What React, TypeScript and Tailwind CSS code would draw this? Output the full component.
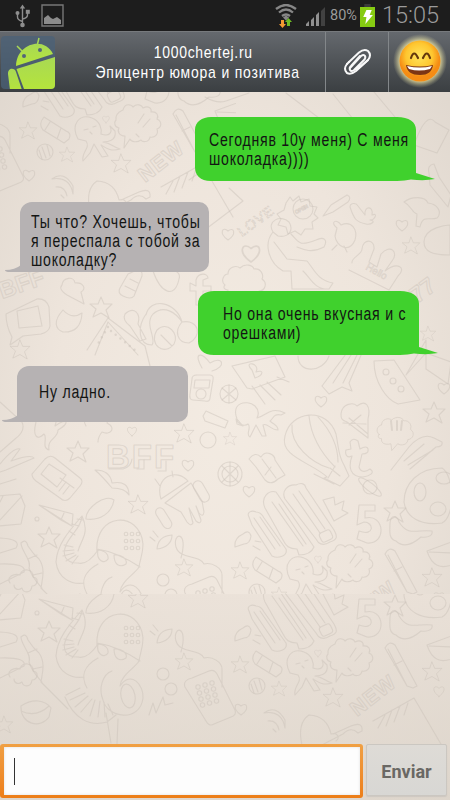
import React from "react";

const sans = "font-['Liberation_Sans',Arial,sans-serif]";

const STAR = "M0-11 3-4 11-4 5 2 8 10 0 5-8 9-5 1-11-4-3-4Z";
const HEART = "M0 6C-10-1-5-8 0-3 6-8 9 0 0 6Z";
const CLOUD =
  "M-20 4c-5-4-1-11 3-11 0-7 8-9 12-6 5-5 13-3 14 1 7-1 10 6 8 10 6 4 3 12-3 12 0 6-8 8-12 5l-7 8-1-8c-7 2-12-1-11-6-4 0-5-3-3-5Z";

type Spot = [number, number, number?];

function Shapes({ d, spots }: { d: string; spots: Spot[] }) {
  return (
    <>
      {spots.map(([x, y, s = 1], i) => (
        <path key={i} d={d} transform={`translate(${x} ${y}) scale(${s})`} />
      ))}
    </>
  );
}

function Wallpaper() {
  return (
    <svg className="h-full w-full" viewBox="0 92 450 708" preserveAspectRatio="none">
      <defs>
        <radialGradient id="paper" cx=".5" cy=".45" r=".75">
          <stop offset="0" stopColor="#f3ebe2" />
          <stop offset=".5" stopColor="#eee5dc" />
          <stop offset="1" stopColor="#ddd5cc" />
        </radialGradient>
        <linearGradient id="fold" x2="0" y2="1">
          <stop offset="0" stopColor="#eae1d8" stopOpacity=".8" />
          <stop offset="1" stopColor="#ddd5cb" stopOpacity=".7" />
        </linearGradient>
        <clipPath id="top"><path d="M0 92h450v502H0z" /></clipPath>
        <clipPath id="bottom"><path d="M0 594h450v206H0z" /></clipPath>
        <clipPath id="corner"><path d="M0 92h236v130H0z" /></clipPath>
        <g id="lower">
          <Shapes d={STAR} spots={[[240, 571, 0.8], [279, 595, 0.7], [333, 604, 0.9], [432, 578, 0.9], [395, 512], [49, 538], [138, 505, 0.9], [184, 568, 0.8], [4, 631, 0.8]]} />
          <Shapes d={HEART} spots={[[318, 559, 0.6], [241, 615], [439, 597, 0.9]]} />
          <path d="M285 499c-4-8 3-15 11-14 6-3 9-1 10 3l28 42c4 7 3 10-4 12-8 5-12 1-14-3ZM265 508c-5-11 4-18 11-16l38 55c-3 7-9 8-15 8l-2-6c-8 0-11-3-14-9ZM249 517c-3-5 3-7 7-5 4 0 6 2 8 6l22 31c2 7-8 10-14 7l-20-31Z" />
          <path d="m293 494 27 39m-21-42 26 38m-53-27 31 44m-24-42 27 40m-52-26 21 31m-15-32 20 29M323 500l11-3 1 8 9-4-2 9 6 3-14 8Z" />
          <rect x="320" y="531" width="12" height="10" rx="3" transform="rotate(-25 326 536)" />
          <path d="M359 505h16v6h-10v7c20-5 22 27 2 25l-10-4 2-8c16 6 15-9 5-9l-7 3Z" />
          <path d="M390 523c1-9 7-8 9-1 9 15 19 7 33 9 1 4-3 7-11 6-8 7-17 12-25 4-8-2-6-11-6-18Z" />
          <path d="M328 560c-1-7 5-9 7-10 2-8 9-5 10-3 4-4 9-2 10 1 6-3 9 1 8 4 6-1 8 4 6 7 6 3 4 9 0 10 2 6-3 9-7 8-1 6-8 5-9 3-4 3-10 2-11-1l-6 9 1-12c-6 0-8-5-6-8-5-1-5-6-3-8Zm22 3 6-9m-1 13 7-8m-14 15 3 3" />
          <path d="M256 557l22 14q6 2 3 8l-5 4-21-13q-5-6 1-13Zm6 5-5 8m16-2-4 11" />
          <path d="M290 579c-8-15 2-26 14-21 8 3 10 11 9 16 8 3 12-1 9-8l5 5c2 10-8 11-12 11 8 1 10 5 17 7-9 3-14-1-19-4l7 11-6 1-8-13-4 9-7 8c-2-9 8-13 3-20Zm6-9 4-1m5-2 3-1m-6 6 2 2" />
          <circle cx="257" cy="592" r="8" /><path d="m251 590 3 9m0-12 4 11m1-13 3 11" />
          <path d="M385 554q4-8 10-3l22 41-4 2-6-2Zm9 17 8-4m-14-12 19 37M427 551l27-10v23q-20 9-27-13Zm2 1 25 1" />
          <path d="M243 534q6-5 8 2-1 8-7 8l-9 3q-1-9 8-13Zm10 12 7 4m-5-9 6 1M264 619q12-9 21 7v8q-3-18-21-15Zm4 8q9-1 11 9m-6-1 3 3" />
          <path d="M302 651q-5-22 7-30 18 1 22 19c7-2 9 4 5 7m-3-7 18-8q12-5 11 5l-4 2q-7-7-15 1l-23 12M373 627l41-23 31 53M378 634l7-13m1 11 6-16m2 12 6-16m4 9 4-12" />
          {/* octopus in a helmet */}
          <path d="M97 552c-3-40 43-42 46-8 0 11-3 15-4 23-4 7-18 14-19 25 11-16 24-1 23 12-3 25-36 20-40 2-5-12 0-26 9-29M97 549q20 3 43 18M98 550c3 0 11 2 10 9-4 6-12 1-10-9Zm16 5c7-1 14 4 12 9-6 4-12 1-12-9ZM98 550c-6 9-12 15-20 13-13 0-16-8-12-18 5-11 15-17 16-29 8 17-1 24-4 35M82 516C68 532 57 545 56 562c2 17 16 23 28 21M98 564c-16 9-17 19-11 30M65 603c9 22 25 30 42 25l9-7m-50-20 14-7m-10 12 15-7m-10 14 13-11m-7 16 11-13m-2 17 5-16m3 17 2-16m5 16-1-15m9 13-5-11M64 545l9 2m-10 4 11-1m-11 6 11-3m-8 8 10-6m-4 9 6-8m-9-25 6 4m-3-11 7 2m-2-7 6 1M106 619l5 30m7-24-1 25" />
          <ellipse cx="128" cy="602" rx="7" ry="12" transform="rotate(-12 128 602)" />
          <path d="M21 543q5-5 7 3 5 8 11 13c7 10 3 21 2 29l27 27M21 543c0 8 11 17 8 25 3 10 9 15 13 20M28 559l9-4m-4 20 9-2M39 505l34 9-1 12ZM39 505l22 15 3-7m-3 7 11 6M86 519c-1-11 20-26 28-19-2 13-14 21-28 19Z" />
          <path d="M157 549q1-13 15-14c0 8-6 13-15 14Zm-2-8-5-4m8 0-5-6M181 558c8-28-9-26-5-11 4 13 23 7 28 17 8-2 18 4 18 11v18M185 593c-2-5 2-8 7-9l17-7q5-2 8 3l18 36q2 5-4 7l-17 7q-5 3-8-3Z" />
          <path d="M10 583c-4-6 4-10 10-8 2-8 14-6 13 2 7 1 4 9-1 9-1 8-9 7-10 2-4 3-8 1-8-3M21 612c12-8 24-6 30 2l-2 9c-8 12-29 8-28-11Zm0 5q15 7 28-5M149 621l4-12 3 10 7-16 2 8 8-2M0 538q22 1 16 10l-16 5m0 11q27-1 24 8L0 584M-2 496l22-2 5 12-4 18-23 2ZM0 520l22-24M3 496l-3 6" />
          <circle cx="163" cy="580" r="6" /><circle cx="171" cy="595" r="6" /><circle cx="37" cy="519" r="2" />
          {[0, 1, 2, 3, 4, 5, 6, 7, 8].map((n) => (
            <circle key={n} cx={126 + (n % 3) * 6} cy={534 + Math.floor(n / 3) * 7} r="1.8" />
          ))}
          {[0, 1, 2, 3, 4, 5, 6, 7, 8, 9, 10, 11].map((n) => (
            <circle key={`key${n}`} cx={198 + (n % 3) * 7 + Math.floor(n / 3) * 1.500} cy={593 + Math.floor(n / 3) * 6 - (n % 3) * 2} r="2.2" />
          ))}
          <path d="M404 502c0-18 14-34 38-34 12 7 14 48 0 55-22 3-36-6-38-21Z" />
          <ellipse cx="420" cy="492" rx="6" ry="9" /><ellipse cx="438" cy="509" rx="8" ry="7" /><ellipse cx="444" cy="478" rx="8" ry="6" />
          <text transform="translate(357 623) rotate(-38)" fontSize="21" fontWeight="700" fontFamily="Liberation Sans" letterSpacing="1">NEW</text>
        </g>
      </defs>
      <rect y="92" width="450" height="708" fill="url(#paper)" />
      <g fill="none" stroke="#c9c0b7" strokeOpacity=".46" strokeWidth="1.1" strokeLinejoin="round" strokeLinecap="round">
        <g clipPath="url(#corner)"><use href="#lower" transform="translate(-212 -440)" /></g>
        <g clipPath="url(#top)">
          <use href="#lower" />
          <Shapes d={STAR} spots={[[411, 246, 0.8], [78, 452], [184, 434, 0.9], [434, 413], [20, 350, 0.9], [101, 308], [230, 439, 0.6], [428, 334, 0.7]]} />
          <Shapes d={HEART} spots={[[228, 234], [251, 253, 1.5], [402, 225], [132, 431, 0.8], [188, 465], [321, 401], [444, 388], [249, 491]]} />
          <Shapes d={CLOUD} spots={[[396, 431, 0.85], [245, 281]]} />
          <path d="m391 421 1 9m5-9v9m5-9-1 9" strokeWidth="2" />
          <path d="M286 203l4-6 3 4 6-5 2 6 8-3 1 7 7 1-3 7 4 4-6 4 1 7-8 0-4 6-6-4-7 3-2-7-8-2 3-6-4-5 7-4Z" />
          <circle cx="303" cy="209" r="10" />
          <text transform="translate(296 214) rotate(-28)" fontSize="5" fontFamily="Liberation Sans">OPEN</text>
          <text transform="translate(242 237) rotate(-36)" fontSize="14" fontFamily="Liberation Sans" letterSpacing="1" strokeDasharray="2 2">LOVE</text>
          <text transform="translate(365 269) rotate(29)" fontSize="10" fontFamily="Liberation Sans" strokeWidth=".7">Hello</text>
          <text transform="translate(417 304) rotate(-36)" fontSize="23" fontWeight="700" fontFamily="Liberation Sans">77</text>
          <text transform="translate(2 299) rotate(-19)" fontSize="24" fontWeight="700" fontFamily="Liberation Sans">BFF</text>
          <text x="106" y="468" fontSize="33" fontWeight="700" fontFamily="Liberation Sans" letterSpacing="2">BFF</text>
          <path d="M109 469h14q8-2 9-10m5 10h7v-9m14 11h8v-10" />
          <path d="M273 232c-7-11 8-18 16-10 5 8 0 16-11 14Zm0 0c-10 12-4 31 10 39h8l1 18h37M291 234c8 8 7 13 25 6 8-4 12 0 8 7-13 7-22 2-27 0m-23-5 13 17 20 2c7 8 10 19 26 22l-4 6c-15 1-19-12-26-18" />
          <path d="m323 216 8-11 16-10q5 2 1 7l-15 10ZM350 207c0-4 6-5 8-1l7 9c-1-10 9-9 7 0 7-3 2 6-2 5 7 1 1 5-4 4-10-2-12-5-16-17ZM337 228c-8-6 0-10 4-3 11-5 17 5 14 15-6 14-19 6-20-4Zm0 17-5 5m12-4 3 6M404 202c8-6 21-6 24 1 9 1 15 9 9 15-8 3-14-4-17 9l-4-1 1-12c-5-1-5-8-13-12Z" />
          <path d="M352 263c-1-6 10-8 10-14 1-11 13-10 12 0l-5 13 8 5 4-13c10-11 18-1 11 7l-7 10c13-10 22-3 13 5l-9 14-40-20M424 242c0-15 24-17 26-17v30c-17 0-26-3-26-13Z" />
          <path d="M6 314 37 299q9-1 12 8l1 19q-1 6-9 8l-18 2-13 9 2-8q-6-11-6-23Zm11-3 21-5 4 20-23 2ZM128 274l9-4q6 0 5 6l-8 20q-3 4-11 0-6-3-3-8Zm-3 12 10 5m-5-12 8 4M62 285c1-8 12-9 13-2 8-1 12 6 6 9l3 12-17-9c-5-3-8-7-5-10Zm1 25q9 10 19 3-1 20-19 19c-8-3-10-11 0-22Z" />
          <path d="M153 271c8-7 30-2 26 8-4 20-18 15-26-8Zm37 12 6 3v-6c2-8 12-7 12-2l-5 2v6h8v5h-8v14h-7v-14h-6ZM146 315c4-18 30-14 36 7 18-3 20 15 7 21-12 0-15-12-7-21-6-9-18-18-29-8-9 10 4 25-1 31-14 0-15-18-6-31ZM125 314c9-8 16-1 13 10l8 15-6 2-10-15q-8-6-5-12ZM87 350l21-32 37 28 5 20M108 322l-13 33m13-33 30 33" />
          <path d="m108 327-12 20m15-16 25 20" strokeWidth="2.500" strokeDasharray="0 6" />
          <path d="M157 330c10-10 23 4 17 14-10 13-26 0-17-14Zm4 5 11 11M202 368c-9-15-1-17 8-5 13-8 17 4 2 8M197 375h13q4 0 3 5l-3 18q0 4-5 3l-12-1q-4 0-3-6l2-15q0-4 5-4Zm-2 5h15l-1 8h-15Z" />
          <circle cx="201" cy="394" r="5" /><circle cx="208" cy="440" r="8" /><circle cx="229" cy="394" r="9" /><path d="m222 388 14 12m0-12-14 12m7-15v18" /><circle cx="230" cy="474" r="12" /><circle cx="230" cy="474" r="8" /><path d="m222 466 16 16m0-16-16 16m8-20v24" />
          <path d="m232 366 43-10 10 21-33 12-5-1Zm20 4c-10-10 9-7 4 2 8-3 8 3-1 6Zm0 16 13 18m-5-19 15 15m-8-18 14 13m-4-18 12 5M298 356c0 18 25 17 31 0M322 386l30-40m13 0-16 37 3 8-10-4-13 7-7-8M333 383l20-31m-10 31 15-30M374 361c0 22 13 39 24 43l22-4-26-40Zm32 14 20-35v29l22 15 3-22-25-9-20 22" />
          <circle cx="386" cy="372" r="3" /><circle cx="393" cy="381" r="3" /><circle cx="401" cy="389" r="3" />
          <path d="M237 419c-6-16 9-20 18-13 5 5 3 10 2 12 9-2 13-12 28-5l-4 2c-7-2-8 4-11 6 4 4 8 4 8 9-8 0-11-8-15-5l3 11h-4l-6-11-6 12c-5-2 2-10-2-13-4 3-10 0-12-5l1 5 6 2Z" />
          <path d="M327 477c-14-14-48-20-42-41 5-25 42-30 51-2 3 15 2 21 8 31l5 11-9 10-16-8ZM292 425c-2 20 20 38 37 43m-20-52c2 20 12 37 26 51m-17-50c13 14 20 29 20 45m-8 6 10 8m-5-10-7 12m-14-4 20 10M341 414c1-11 13-12 16-8 9-7 14 0 11 13v19l-21-16c-6-2-6-4-6-8Zm2 9 23 1m-17-6 19 16m-7-19-12 10" />
          <path d="M346 450l5-1-1-7q3-5 8-1l2 8q7-4 8 0 1 5-6 5l-3 13c2 6 7 5 11 2 6 4-1 7-7 8-13 0-15-10-11-21-6 3-7-3-6-6ZM249 459q6-8 12-2c5-8 14-2 14 3l10 15-7 4q-7 7-13 1l-9-13ZM262 459l14 19m-11-3 6-8M391 470l18-23q13-15 25-9l8 4q1 5-6 5l-26 22M404 461l20-17m-16 21 25-15" />
          <ellipse cx="370" cy="487" rx="14" ry="4" transform="rotate(38 370 487)" /><circle cx="370" cy="487" r="7" />
          <path d="m32 474 13-15q5-5 10-1l25 20q4 3 0 8l-10 12q-5 5-10 0l-24-17q-4-3-4-7Zm9 0 8-10 17 11-9 12Zm25 8-7 9m11-6-7 9m-3-16 14 10M95 470q15 0 17 13 17-3 17 12-4-7-17-7-10-12-17-18Z" />
          {/* robot */}
          <path d="M161 499c-7-23 16-31 27-18Zm-1-13-5-7m18-2-1-6M165 503l26-20 11 18 2 11q-1 6-5 1l-3-7 5 14q0 5-5 1l-7-13 4 15q-2 4-6-1l-6-10Z" />
          <rect x="159" y="507" width="9" height="23" rx="5" transform="rotate(-32 163 518)" /><rect x="196" y="480" width="10" height="23" rx="5" transform="rotate(-30 201 491)" />
          <path d="M36 422c-1-17 3-14 12-5 7-3 10 0 7 9 13-9 15-3 3 4 0 9-11 8-9 20-8-2-1-13-5-16-6 6-12 4-8-12ZM86 426c-6-10 5-16 10-8 5-9 15-2 11 5 10 5 3 13-5 9-4 5-4 8-4 10M0 402l22 20q4 9-7 17L0 452m0 12q14-17 20-15l-9 12q20-7 23-3L6 470 0 472m0 12 16-5" />
          <path d="m203 416 3-5 22 10-3 7-20-7ZM414 145q12-34 21-23l14 8-12 23ZM429 173q-2-8 5-9l5 13 12 18-3 12-18-22Z" />
          <path d="M205 97q12 7 21 4l23-8m37 0 50 38M333 94l28 35M374 92l21 25M189 180l45-32m-5 40 14 13-45 34" />
        </g>
        <g clipPath="url(#bottom)">
          <rect y="594" width="450" height="206" fill="url(#fold)" stroke="none" />
          <use href="#lower" transform="translate(0 94)" />
        </g>
      </g>
    </svg>
  );
}

function StatusBar() {
  return (
    <div className="relative z-10 flex h-[31px] items-center bg-[#1d1d1d] text-[#9b9b9b]">
      <svg className="ml-[15px] h-6 w-[15px] shrink-0" viewBox="0 0 15 24" fill="none" stroke="#8e8e8e" strokeWidth="1.4">
        <path d="M7.500 21V4M2.500 10v3q0 3 5 4.500M12.500 8v3q0 3-5 4" />
        <path d="M4.800 4.500 7.500.5l2.700 4Z" fill="#8e8e8e" stroke="none" />
        <circle cx="7.500" cy="21" r="2.300" fill="#8e8e8e" stroke="none" />
        <circle cx="2.500" cy="9" r="2" fill="#8e8e8e" stroke="none" />
        <path d="M10.800 5.800h4v4h-4z" fill="#8e8e8e" stroke="none" />
      </svg>
      <svg className="ml-[11px] h-[23px] w-[23px] shrink-0" viewBox="0 0 23 23">
        <path d="M1 1h21v21H1z" fill="none" stroke="#777" strokeWidth="1.400" />
        <path d="M3 20v-6l4-3 3 3 2 1 4-2 4 3v4Z" fill="#8c8c8c" />
      </svg>
      <svg className="ml-[211px] h-6 w-[22px] shrink-0" viewBox="0 0 22 24" fill="none">
        <path d="M1 5q10-8 20 0M4 8.500q7-6 14 0M7 12q4-3 8 0" stroke="#878787" strokeWidth="2.300" />
        <path d="m8 13.500 3-2 3 2-3 3Z" fill="#878787" />
        <path d="M6 16h3v4h2l-3.500 4L4 20h2Z" fill="#f49a32" />
        <path d="M12 22h3v-4h2l-3.500-4-3.500 4h2Z" fill="#70bd24" />
      </svg>
      <svg className="mt-[2px] ml-[8px] h-[21px] w-[21px] shrink-0" viewBox="0 0 21 21">
        <path d="M16 5l4-4v19h-4Z" fill="#414141" />
        <path d="M1 20v-2l3-3v5Zm5 0v-6l3-3v9Zm5 0V9l3-3v14Z" fill="#909090" />
      </svg>
      <span className="ml-[4px] w-[28px] shrink-0 whitespace-nowrap pt-px font-['Roboto',sans-serif] text-[14.5px] leading-none">80%</span>
      <svg className="ml-[2px] h-[23px] w-[15px] shrink-0" viewBox="0 0 14 23" preserveAspectRatio="none">
        <path d="M4 0h6v3H4z" fill="#3a3a3a" />
        <path d="M0 3h14v20H0z" fill="#86cb12" />
        <path d="M6 6h5l-2 5h3l-7 9 1-7H3Z" fill="white" />
      </svg>
      <span className="ml-[7px] whitespace-nowrap pt-px font-['Roboto',sans-serif] text-[23.500px] font-light leading-none">15:05</span>
    </div>
  );
}

function Header() {
  return (
    <header className="relative z-10 flex h-[61px] items-center border-t border-[#777a7d] bg-linear-to-b from-[#65696e] to-[#3b3f42]">
      <svg className="ml-px h-[53px] w-[54px] shrink-0" viewBox="0 0 54 53">
        <defs>
          <linearGradient id="droid" x2="0" y2="1"><stop stopColor="#a8d954" /><stop offset="1" stopColor="#b5e43c" /></linearGradient>
          <clipPath id="badge"><rect width="54" height="53" rx="4" /></clipPath>
        </defs>
        <rect width="54" height="53" rx="4" fill="#4b6178" fillOpacity=".75" />
        <g clipPath="url(#badge)" fill="url(#droid)">
          <path d="M15 30C15 8 43-1 52 18Z" />
          <path d="M15.500 33 54 21v32H23Z" />
          <path d="M7 38c0-7 7-6 8-2l6 18H9Z" />
          <path d="m16 10 5 5m17-13-2 8" stroke="#a8d954" strokeWidth="1.500" />
          <circle cx="23" cy="20" r="2" fill="#536579" /><circle cx="39" cy="14" r="2" fill="#536579" />
        </g>
      </svg>
      <div className={`flex h-full w-[270px] shrink-0 flex-col items-center justify-center pt-px pl-[16px] text-[17px] leading-[20px] text-white ${sans}`}>
        <span className="ml-[11px] origin-center scale-x-[.82] whitespace-nowrap tracking-[.85px]">1000chertej.ru</span>
        <span className="origin-center scale-x-[.82] whitespace-nowrap tracking-[1px]">Эпицентр юмора и позитива</span>
      </div>
      <div className="flex h-full w-[64px] shrink-0 items-center justify-center border-x border-[#83878a]">
        <svg className="h-7 w-[29px]" viewBox="0 0 29 28" fill="none" stroke="#f7f7f7" strokeWidth="2" strokeLinecap="round" strokeLinejoin="round">
          <path d="M6 14 16 4.500q5-4 9-1.500 4 4 0 9L13 23q-5 4-9 2-4-4 0-9" />
          <path d="M4 16 6 14M7 20 18 8q3-2 4 0 1 2-1 4L11 22q-3 2-4 0-1-2 1-4l9-10M11 22q4-1 7-4l7-6" />
        </svg>
      </div>
      <div className="flex h-full flex-1 items-center justify-center pb-[3px]">
        <svg className="h-[56px] w-[56px] shrink-0" viewBox="0 0 56 56">
          <defs>
            <radialGradient id="halo"><stop offset=".7" stopColor="#fff5aa" stopOpacity=".9" /><stop offset="1" stopColor="#c8c59b" stopOpacity="0" /></radialGradient>
            <radialGradient id="face" cx=".48" cy=".38"><stop stopColor="#ffe45c" /><stop offset=".65" stopColor="#fec62f" /><stop offset="1" stopColor="#f58c14" /></radialGradient>
          </defs>
          <circle cx="28" cy="28" r="27" fill="url(#halo)" />
          <circle cx="28" cy="28" r="20.500" fill="url(#face)" />
          <path d="M19 25q3-9 7 0m5 0q4-9 7 0" fill="none" stroke="#63380d" strokeWidth="2.200" strokeLinecap="round" />
          <path d="M14 32q14 3 27 0-1 10-13 10-13 0-14-10Z" fill="#7c3515" />
          <path d="M15 33q13 3 25 0l-2 3q-11 3-21 0Z" fill="white" />
        </svg>
      </div>
    </header>
  );
}

function Bubble({ mine, place, size, lines }: { mine?: boolean; place: string; size: string; lines: string[] }) {
  return (
    <div className={`relative ${place} ${size} ${sans} text-[18px] leading-[19px] tracking-[1px] text-[#131513]`}>
      {mine ? (
        <svg className="absolute inset-0 h-full w-full overflow-visible" viewBox="0 0 221 65" preserveAspectRatio="none" fill="#40d12d">
          <path d="M16 0H202C214 0 221 5 221 13V57L240 63Q230 65 216 63.500Q210 65 202 65H16C5 65 0 59 0 51V13C0 5 7 0 16 0Z" />
        </svg>
      ) : (
        <>
          <div className="absolute inset-0 rounded-[12px_10px_10px_6px] bg-[#b6b2b3]" />
          <svg className="absolute bottom-0 -left-[15px] h-[7px] w-[30px]" viewBox="0 0 30 7" fill="#b6b2b3"><path d="M0 5Q10 5 16 0L29 7H5Q0 7 0 5Z" /></svg>
        </>
      )}
      <div className="relative">
        {lines.map((line) => (
          <div key={line} className="origin-left scale-x-[.782] whitespace-nowrap">{line}</div>
        ))}
      </div>
    </div>
  );
}

export default function App() {
  return (
    <div className="relative flex h-[800px] w-[450px] flex-col overflow-hidden bg-[#e7dfd5]">
      <div className="absolute inset-x-0 top-[92px] bottom-0"><Wallpaper /></div>
      <StatusBar />
      <Header />
      <main className="relative flex min-h-0 flex-1 flex-col items-start">
        <Bubble mine place="mt-[25px] ml-[195px]" size="h-[64px] w-[221px] pt-[14px] pl-[14px]" lines={["Сегодняв 10у меня) С меня", "шоколадка))))"]} />
        <Bubble place="mt-[21px] ml-[20px]" size="h-[70px] w-[189px] pt-[11px] pl-[11px]" lines={["Ты что? Хочешь, чтобы", "я переспала с тобой за", "шоколадку?"]} />
        <Bubble mine place="mt-[19px] ml-[198px]" size="h-[64px] w-[221px] pt-[14px] pl-[25px]" lines={["Но она очень вкусная и с", "орешками)"]} />
        <Bubble place="mt-[11px] ml-[17px]" size="h-[56px] w-[171px] pt-[17px] pl-[22px]" lines={["Ну ладно."]} />
      </main>
      <footer className="relative flex h-[56px] items-start">
        <div className="h-[54px] w-[363px] shrink-0 rounded-[3px] bg-linear-to-b from-[#f0a043] to-[#ed7e17] p-[3px] pl-[4px]">
          <div className="flex h-full items-center bg-[#fdfdfd] pl-[10px] shadow-[inset_0_0_3px_#ddd]"><span className="h-[27px] w-px bg-[#333]" /></div>
        </div>
        <button className="ml-[3px] flex h-[52px] w-[81px] items-center justify-center rounded-[2px] border border-[#cbc7c1] bg-linear-to-b from-[#dedbd6] to-[#d8d7d4] pt-[3px] font-['Roboto',sans-serif] text-[18px] font-bold text-[#6a6864] shadow-[0_1px_1px_#aaa5]">Enviar</button>
      </footer>
    </div>
  );
}
